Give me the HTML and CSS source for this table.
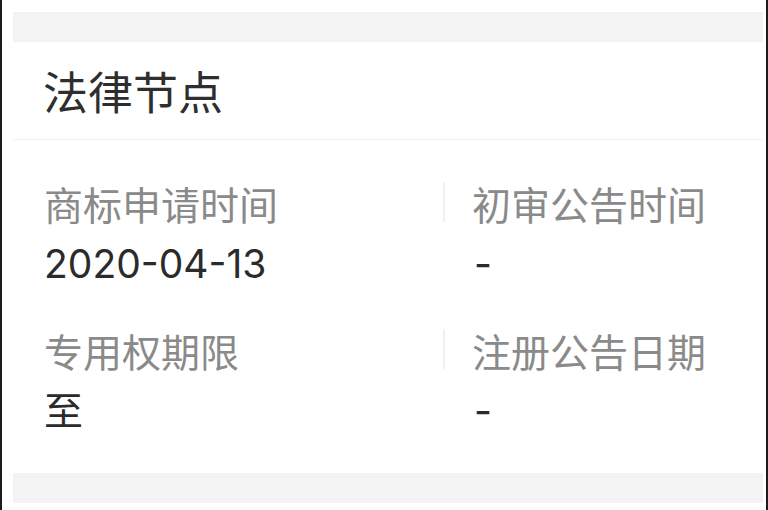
FILE: index.html
```html
<!DOCTYPE html>
<html lang="zh-CN">
<head>
<meta charset="utf-8">
<link rel="stylesheet" href="styles.css">
</head>
<body>
<div class="frame">
  <div class="band"></div>
  <section class="card">
    <header class="card-head">
      <h2 class="card-title">法律节点</h2>
    </header>
    <div class="card-body">
      <div class="item">
        <div class="label">商标申请时间</div>
        <div class="value">2020-04-13</div>
      </div>
      <div class="item item-right">
        <div class="label">初审公告时间</div>
        <div class="value">-</div>
      </div>
      <div class="item">
        <div class="label">专用权期限</div>
        <div class="value">至</div>
      </div>
      <div class="item item-right">
        <div class="label">注册公告日期</div>
        <div class="value">-</div>
      </div>
    </div>
  </section>
  <div class="band"></div>
</div>
</body>
</html>
```

FILE: styles.css
```css
html, body {
  margin: 0;
  padding: 0;
  background: #ffffff;
}

body {
  width: 768px;
  height: 510px;
  overflow: hidden;
  font-family: "Inter", "Noto Sans CJK SC", sans-serif;
}

.frame {
  box-sizing: border-box;
  height: 510px;
  border-left: 2px solid #1c1c1c;
  border-right: 2px solid #1c1c1c;
  padding: 12px 3px 0 11px;
  display: flex;
  flex-direction: column;
}

.band {
  height: 30px;
  background: #f3f3f3;
  flex: none;
}

.card {
  background: #ffffff;
  height: 431px;
  display: flex;
  flex-direction: column;
}

.card-head {
  height: 97px;
  border-bottom: 1px solid #f0f0f0;
  display: flex;
  align-items: center;
  padding-left: 30px;
}

.card-title {
  margin: 0;
  font-family: "Noto Sans CJK SC", sans-serif;
  font-weight: 400;
  font-size: 45px;
  line-height: 1;
  color: #2e2e2e;
}

.card-body {
  display: grid;
  grid-template-columns: 399px 1fr;
  row-gap: 25px;
  padding: 33px 0 0 31px;
}

.item .label {
  font-family: "Noto Sans CJK SC", sans-serif;
  font-size: 39px;
  line-height: 60px;
  color: #8a8a8a;
  white-space: nowrap;
}

.item .value {
  font-size: 39px;
  line-height: 62px;
  color: #2b2b2b;
  white-space: nowrap;
}

.item-right .label {
  position: relative;
  padding-left: 29px;
}

.item-right .label::before {
  content: "";
  position: absolute;
  left: 0;
  top: 9px;
  width: 2px;
  height: 40px;
  background: #f0f0f0;
}

.item-right .value {
  padding-left: 31px;
}
```
